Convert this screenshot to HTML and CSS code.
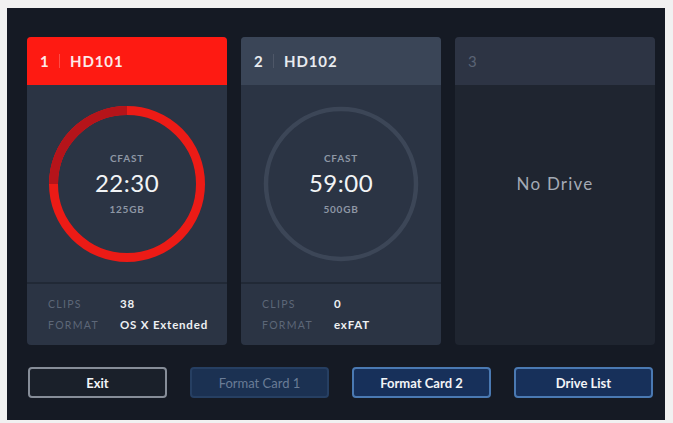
FILE: index.html
```html
<!DOCTYPE html>
<html>
	<head>
		<meta charset="UTF-8">
		<meta name="viewport" content="width=device-width, initial-scale=1.0">
		<title>Media</title>
		<link rel="stylesheet" href="styles.css">
	</head>

	<body>
		<div class="screen">
			<section class="cards">
				<!-- 插槽 1 -->
				<div class="card active">
					<div class="card-head">
						<span class="slot">1</span><span class="name">HD101</span>
					</div>
					<div class="card-body">
						<div class="ring">
							<svg viewBox="0 0 170 170" width="170" height="170">
								<circle cx="85" cy="85" r="73.5" fill="none" stroke="#ec1b16" stroke-width="9"></circle>
								<path d="M11.5 85 A73.5 73.5 0 0 1 85 11.5" fill="none" stroke="#b5141a" stroke-width="9"></path>
							</svg>
							<div class="ring-text">
								<div class="media">CFAST</div>
								<div class="time">22:30</div>
								<div class="size">125GB</div>
							</div>
						</div>
					</div>
					<div class="card-foot">
						<div class="row"><span class="label">CLIPS</span><span class="value">38</span></div>
						<div class="row"><span class="label">FORMAT</span><span class="value">OS X Extended</span></div>
					</div>
				</div>

				<!-- 插槽 2 -->
				<div class="card">
					<div class="card-head">
						<span class="slot">2</span><span class="name">HD102</span>
					</div>
					<div class="card-body">
						<div class="ring">
							<svg viewBox="0 0 170 170" width="170" height="170">
								<circle cx="85" cy="85" r="75" fill="none" stroke="#3c4657" stroke-width="4.5"></circle>
							</svg>
							<div class="ring-text">
								<div class="media">CFAST</div>
								<div class="time">59:00</div>
								<div class="size">500GB</div>
							</div>
						</div>
					</div>
					<div class="card-foot">
						<div class="row"><span class="label">CLIPS</span><span class="value">0</span></div>
						<div class="row"><span class="label">FORMAT</span><span class="value">exFAT</span></div>
					</div>
				</div>

				<!-- 插槽 3 -->
				<div class="card empty">
					<div class="card-head">
						<span class="slot">3</span>
					</div>
					<div class="card-body no-drive">No Drive</div>
				</div>
			</section>

			<section class="buttons">
				<button class="btn exit">Exit</button>
				<button class="btn disabled">Format Card 1</button>
				<button class="btn">Format Card 2</button>
				<button class="btn">Drive List</button>
			</section>
		</div>
	</body>

</html>
```

FILE: styles.css
```css
* {
	padding: 0;
	margin: 0;
	box-sizing: border-box;
}

body {
	background: #f1f1f1;
	font-family: Lato, "Open Sans", sans-serif;
}

.screen {
	width: 658px;
	height: 412px;
	margin: 8px 0 0 7px;
	padding: 29px 0 0 20px;
	background: #151a24;
}

.cards {
	display: grid;
	grid-template-columns: repeat(3, 200px);
	column-gap: 14px;
}

.card {
	height: 308px;
	border-radius: 4px;
	overflow: hidden;
	background: #2b3444;
	display: flex;
	flex-direction: column;
}

.card-head {
	height: 48px;
	display: flex;
	align-items: center;
	padding-left: 13px;
	background: #3a4557;
	color: #e8ebef;
	font-size: 15px;
	font-weight: 700;
	letter-spacing: 0.9px;
}

.card-head .slot {
	width: 20px;
	padding-right: 10px;
	margin-right: 10px;
	border-right: 1px solid rgba(255, 255, 255, 0.1);
	line-height: 14px;
}

.active .card-head {
	background: #fe1a12;
	color: #fde9e7;
}

.active .card-head .slot {
	border-right-color: rgba(255, 255, 255, 0.22);
}

.card-body {
	height: 197px;
	display: flex;
	justify-content: center;
	align-items: center;
}

.ring {
	position: relative;
	width: 170px;
	height: 170px;
}

.ring svg {
	display: block;
}

.ring-text {
	position: absolute;
	inset: 0;
	display: flex;
	flex-direction: column;
	align-items: center;
	justify-content: center;
	text-align: center;
}

.media,
.size {
	font-size: 10px;
	letter-spacing: 0.8px;
	color: #8e97a5;
	font-weight: 700;
}

.time {
	font-size: 24px;
	color: #f2f4f6;
	letter-spacing: 0.5px;
	margin: 7px 0 8px;
	line-height: 24px;
}

.card-foot {
	flex: 1;
	border-top: 2px solid #212936;
	padding: 9px 0 0 21px;
}

.card-foot .row {
	display: flex;
	align-items: center;
	height: 21px;
	font-size: 10.5px;
}

.label {
	width: 72px;
	color: #5d6778;
	letter-spacing: 1.3px;
}

.value {
	color: #eef0f3;
	font-size: 11.5px;
	font-weight: 700;
	letter-spacing: 0.8px;
}

.empty {
	background: #1f2530;
}

.empty .card-head {
	background: #2d3444;
	color: #5a6374;
	font-weight: 400;
}

.empty .card-head .slot {
	border-right: none;
}

.no-drive {
	font-size: 17px;
	letter-spacing: 1.2px;
	color: #a3aab5;
}

.buttons {
	display: grid;
	grid-template-columns: repeat(4, 139px);
	column-gap: 23px;
	margin: 22px 0 0 1px;
}

.btn {
	height: 31px;
	border-radius: 4px;
	border: 2px solid #4a79b2;
	background: #17305a;
	color: #f2f4f7;
	font-family: Lato, "Open Sans", sans-serif;
	font-size: 13px;
	font-weight: 700;
}

.btn.exit {
	background: #1a202a;
	border-color: #868d98;
}

.btn.disabled {
	background: #1b3152;
	border-color: #263f62;
	color: #6a7c96;
	font-weight: 400;
}
```
